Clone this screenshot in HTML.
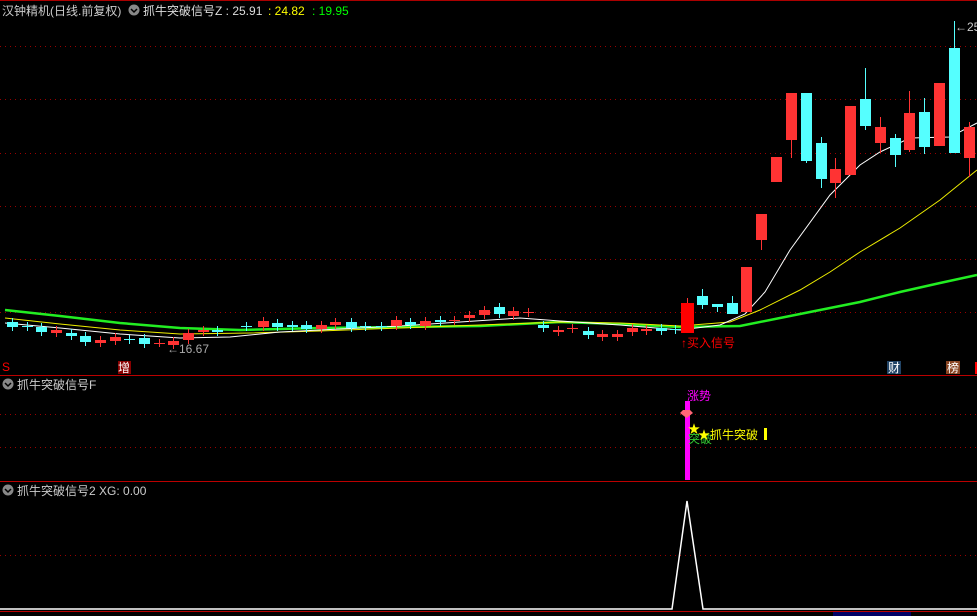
<!DOCTYPE html>
<html><head><meta charset="utf-8"><style>
body{margin:0;background:#000;width:977px;height:616px;overflow:hidden}
svg{display:block}
text{font-family:"Liberation Sans","Noto Sans CJK SC",sans-serif;font-size:12px}
</style></head><body>
<svg width="977" height="616" viewBox="0 0 977 616">
<rect width="977" height="616" fill="#000"/>
<line x1="0" y1="0.5" x2="977" y2="0.5" stroke="#a00" />
<g stroke="#900" stroke-dasharray="1,4">
<line x1="0" y1="46.5" x2="977" y2="46.5"/><line x1="0" y1="99.5" x2="977" y2="99.5"/>
<line x1="0" y1="153.5" x2="977" y2="153.5"/><line x1="0" y1="206.5" x2="977" y2="206.5"/>
<line x1="0" y1="259.5" x2="977" y2="259.5"/><line x1="0" y1="312.5" x2="977" y2="312.5"/>
<line x1="0" y1="414.5" x2="977" y2="414.5"/><line x1="0" y1="447.5" x2="977" y2="447.5"/>
<line x1="0" y1="555.5" x2="977" y2="555.5"/>
</g>
<line x1="0" y1="375.5" x2="977" y2="375.5" stroke="#b00"/>
<line x1="0" y1="481.5" x2="977" y2="481.5" stroke="#b00"/>
<line x1="0" y1="611.5" x2="977" y2="611.5" stroke="#b00"/>
<!-- header -->
<text x="2" y="15" fill="#ccc">汉钟精机(日线.前复权)</text>
<circle cx="134" cy="10" r="5.5" fill="#888"/><path d="M131 9l3 3 3-3" stroke="#000" fill="none" stroke-width="1.5"/>
<text x="143" y="15" fill="#ddd">抓牛突破信号Z : 25.91</text>
<text x="268" y="15" fill="#ff0">: 24.82</text>
<text x="312" y="15" fill="#0f0">: 19.95</text>
<!-- MAs -->
<polyline fill="none" stroke="#2e2" stroke-width="2.5" points="5,310 60,316 120,323 180,328 240,330 320,328 400,327 480,326 560,322 620,324 680,327 740,326 780,318 820,310 860,302 900,292 940,283 977,275"/>
<polyline fill="none" stroke="#ee0" stroke-width="1" points="5,318 60,324 120,330 180,334 250,333 320,331 400,328 480,325 560,322 620,323 680,326 730,322 760,310 800,290 830,272 860,252 900,228 940,200 977,170"/>
<polyline fill="none" stroke="#fff" stroke-width="1" points="5,323 60,328 120,334 180,338 230,337 280,332 340,329 400,326 460,322 520,318 560,321 620,325 680,330 720,325 745,314 765,292 790,250 830,195 860,165 880,152 910,138 950,137 977,123"/>
<g id="lc"></g>
<g>
<rect x="681" y="303" width="13" height="30" fill="#f00"/><line x1="687.5" y1="298" x2="687.5" y2="303" stroke="#f33"/>
<line x1="702.5" y1="289" x2="702.5" y2="309" stroke="#5ff"/><rect x="697" y="296" width="11" height="9" fill="#5ff"/>
<line x1="717.5" y1="304" x2="717.5" y2="312" stroke="#5ff"/><rect x="712" y="304" width="11" height="3" fill="#5ff"/>
<line x1="732.5" y1="296" x2="732.5" y2="314" stroke="#5ff"/><rect x="727" y="303" width="11" height="11" fill="#5ff"/>
<rect x="741" y="267" width="11" height="45" fill="#f33"/>
<line x1="761.5" y1="214" x2="761.5" y2="250" stroke="#f33"/><rect x="756" y="214" width="11" height="26" fill="#f33"/>
<rect x="771" y="157" width="11" height="25" fill="#f33"/>
<line x1="791.5" y1="93" x2="791.5" y2="158" stroke="#f33"/><rect x="786" y="93" width="11" height="47" fill="#f33"/>
<line x1="806.5" y1="93" x2="806.5" y2="163" stroke="#5ff"/><rect x="801" y="93" width="11" height="68" fill="#5ff"/>
<line x1="821.5" y1="137" x2="821.5" y2="188" stroke="#5ff"/><rect x="816" y="143" width="11" height="36" fill="#5ff"/>
<line x1="835.5" y1="158" x2="835.5" y2="198" stroke="#f33"/><rect x="830" y="169" width="11" height="14" fill="#f33"/>
<rect x="845" y="106" width="11" height="69" fill="#f33"/>
<line x1="865.5" y1="68" x2="865.5" y2="130" stroke="#5ff"/><rect x="860" y="99" width="11" height="27" fill="#5ff"/>
<line x1="880.5" y1="117" x2="880.5" y2="153" stroke="#f33"/><rect x="875" y="127" width="11" height="16" fill="#f33"/>
<line x1="895.5" y1="134" x2="895.5" y2="167" stroke="#5ff"/><rect x="890" y="138" width="11" height="17" fill="#5ff"/>
<line x1="909.5" y1="91" x2="909.5" y2="152" stroke="#f33"/><rect x="904" y="113" width="11" height="37" fill="#f33"/>
<line x1="924.5" y1="98" x2="924.5" y2="154" stroke="#5ff"/><rect x="919" y="112" width="11" height="35" fill="#5ff"/>
<rect x="934" y="83" width="11" height="63" fill="#f33"/>
<line x1="954.5" y1="21" x2="954.5" y2="153" stroke="#5ff"/><rect x="949" y="48" width="11" height="105" fill="#5ff"/>
<line x1="969.5" y1="122" x2="969.5" y2="177" stroke="#f33"/><rect x="964" y="127" width="11" height="31" fill="#f33"/>
</g>
<text x="955" y="31" fill="#ccc" font-size="11">←25</text>
<text x="167" y="353" fill="#aaa" font-size="11">←16.67</text>
<text x="681" y="347" fill="#f00">↑买入信号</text>
<text x="2" y="371" fill="#f00" font-size="11">S</text>
<rect x="118" y="361" width="13" height="13" fill="#800"/><text x="118" y="372" fill="#fff" font-size="11">增</text>
<rect x="887" y="361" width="14" height="13" fill="#246"/><text x="888" y="372" fill="#fff" font-size="11">财</text>
<rect x="946" y="361" width="14" height="13" fill="#842"/><text x="947" y="372" fill="#fff" font-size="11">榜</text>
<rect x="975" y="362" width="2" height="12" fill="#f00"/>
<circle cx="8" cy="384" r="5.5" fill="#888"/><path d="M5 383l3 3 3-3" stroke="#000" fill="none" stroke-width="1.5"/>
<text x="17" y="389" fill="#ccc">抓牛突破信号F</text>
<rect x="685" y="401" width="5" height="79" fill="#f0f"/>
<text x="687" y="400" fill="#f0f" font-size="7">涨势</text>
<path d="M680 413l3-3h7l3 3-6.5 5z" fill="#f67"/>
<text x="688" y="443" fill="#3c3" font-size="11">突破</text>
<text x="688" y="433" fill="#ff0" font-size="12">★</text>
<text x="698" y="439" fill="#ff0" font-size="13">★抓牛突破</text>
<rect x="764" y="428" width="3" height="12" fill="#ff0"/>
<circle cx="8" cy="490" r="5.5" fill="#888"/><path d="M5 489l3 3 3-3" stroke="#000" fill="none" stroke-width="1.5"/>
<text x="17" y="495" fill="#ccc">抓牛突破信号2 XG: 0.00</text>
<polyline fill="none" stroke="#fff" stroke-width="1.5" points="0,609 672,609 687,501 703,609 977,609"/>
<rect x="833" y="612" width="78" height="4" fill="#006"/>
</svg>
<script>
var g=document.getElementById('lc'),s='';
var d=[[7,322,327,'c'],[22,326,327,'c'],[36,327,332,'c'],[51,330,333,'r'],[66,333,336,'c'],[80,336,342,'c'],[95,340,343,'r'],[110,337,341,'r'],[124,339,340,'c'],[139,338,344,'c'],[154,343,343,'r'],[168,341,345,'r'],[183,333,340,'r'],[198,330,332,'r'],[212,330,332,'c'],[241,326,327,'c'],[258,321,327,'r'],[272,323,327,'c'],[287,325,327,'c'],[301,325,329,'c'],[316,325,329,'r'],[330,322,325,'r'],[346,322,328,'c'],[360,326,327,'c'],[376,326,327,'c'],[391,320,326,'r'],[405,322,325,'c'],[420,321,326,'r'],[435,320,322,'c'],[449,320,321,'r'],[464,315,318,'r'],[479,310,315,'r'],[494,307,314,'c'],[508,311,316,'r'],[523,312,313,'r'],[538,325,328,'c'],[553,330,332,'r'],[567,328,329,'r'],[583,331,335,'c'],[597,334,337,'r'],[612,334,337,'r'],[627,328,332,'r'],[641,329,331,'r'],[656,328,331,'c'],[670,329,330,'c']];
d.forEach(function(c){var col=c[3]=='r'?'#f33':'#5ff';s+='<line x1="'+(c[0]+5.5)+'" y1="'+(c[1]-4)+'" x2="'+(c[0]+5.5)+'" y2="'+(c[2]+4)+'" stroke="'+col+'"/><rect x="'+c[0]+'" y="'+c[1]+'" width="11" height="'+Math.max(1,c[2]-c[1])+'" fill="'+col+'"/>';});
g.innerHTML=s;
</script>
</body></html>
